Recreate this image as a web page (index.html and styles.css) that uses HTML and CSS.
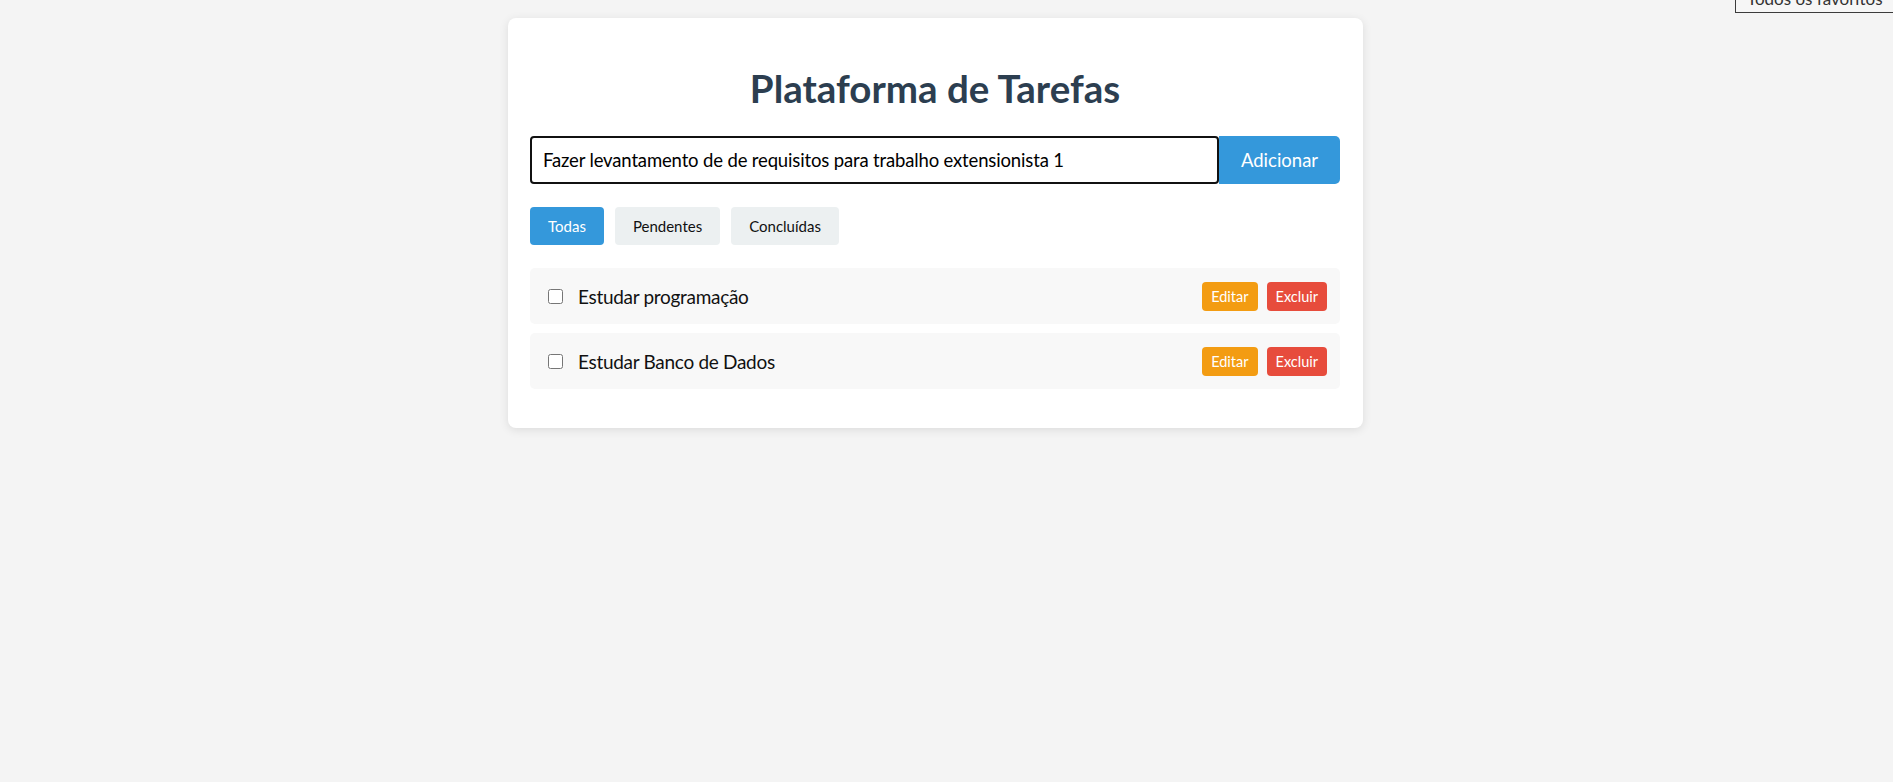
FILE: index.html
```html
<!DOCTYPE html>
<html lang="pt-BR">
<head>
<meta charset="utf-8">
<title>Plataforma de Tarefas</title>
<link rel="stylesheet" href="styles.css">
</head>
<body>
<div class="page">
  <main class="card">
    <h1 class="title">Plataforma de Tarefas</h1>
    <div class="add-row">
      <input class="task-input" type="text" value="Fazer levantamento de de requisitos para trabalho extensionista 1">
      <button class="add-btn">Adicionar</button>
    </div>
    <div class="filters">
      <button class="filter active">Todas</button>
      <button class="filter">Pendentes</button>
      <button class="filter">Concluídas</button>
    </div>
    <ul class="tasks">
      <li class="task">
        <input class="check" type="checkbox">
        <span class="task-text">Estudar programação</span>
        <div class="actions">
          <button class="btn-edit">Editar</button>
          <button class="btn-del">Excluir</button>
        </div>
      </li>
      <li class="task">
        <input class="check" type="checkbox">
        <span class="task-text">Estudar Banco de Dados</span>
        <div class="actions">
          <button class="btn-edit">Editar</button>
          <button class="btn-del">Excluir</button>
        </div>
      </li>
    </ul>
  </main>
</div>
<div class="tooltip">Todos os favoritos</div>
</body>
</html>
```

FILE: styles.css
```css
html, body {
  margin: 0;
  padding: 0;
}
body {
  background: #f4f4f4;
  font-family: Lato, "Noto Sans", sans-serif;
  color: #111;
  min-height: 782px;
  overflow: hidden;
}
.page {
  padding: 18px 22px 0 0;
}
.card {
  width: 855px;
  box-sizing: border-box;
  margin: 0 auto;
  background: #fff;
  border-radius: 8px;
  box-shadow: 0 2px 10px rgba(0, 0, 0, 0.1);
  padding: 47px 23px 30px 22px;
}
.title {
  margin: 0 0 25px;
  text-align: center;
  font-size: 38.5px;
  line-height: 46px;
  font-weight: 700;
  color: #2c3e50;
}
.add-row {
  display: flex;
  height: 48px;
}
.task-input {
  flex: 1;
  min-width: 0;
  box-sizing: border-box;
  height: 48px;
  margin: 0;
  border: 2px solid #111;
  border-radius: 4px;
  padding: 0 11px;
  font-family: inherit;
  font-size: 18.5px;
  letter-spacing: -0.15px;
  color: #000;
  outline: none;
}
.add-btn {
  width: 121px;
  height: 48px;
  margin: 0;
  border: none;
  border-radius: 0 5px 5px 0;
  background: #3498db;
  color: #fff;
  font-family: inherit;
  font-size: 18.5px;
}
.filters {
  display: flex;
  gap: 11px;
  margin: 23px 0;
}
.filter {
  height: 38px;
  margin: 0;
  padding: 0 18px;
  border: none;
  border-radius: 4px;
  background: #ecf0f1;
  color: #111;
  font-family: inherit;
  font-size: 15px;
}
.filter.active {
  background: #3498db;
  color: #fff;
}
.tasks {
  list-style: none;
  margin: 0;
  padding: 0;
}
.task {
  display: flex;
  align-items: center;
  height: 56px;
  box-sizing: border-box;
  padding: 0 13px 0 14px;
  margin-bottom: 9px;
  background: #f8f8f8;
  border-radius: 5px;
}
.check {
  width: 15px;
  height: 15px;
  margin: 0 15px 0 4px;
}
.task-text {
  flex: 1;
  font-size: 19px;
  letter-spacing: -0.3px;
  color: #111;
}
.actions {
  display: flex;
  gap: 9px;
}
.btn-edit, .btn-del {
  height: 29px;
  margin: 0;
  padding: 0 9px;
  border: none;
  border-radius: 4px;
  color: #fff;
  font-family: inherit;
  font-size: 14.5px;
}
.btn-edit {
  background: #f39c12;
}
.btn-del {
  background: #e74c3c;
}
.tooltip {
  position: absolute;
  left: 1735px;
  top: -10px;
  width: 170px;
  height: 21px;
  border: 1px solid #3c3c3c;
  background: #f6f6f6;
  color: #333;
  font-size: 17px;
  line-height: 16px;
  padding-left: 11px;
  box-sizing: content-box;
  white-space: nowrap;
  overflow: hidden;
}
```
